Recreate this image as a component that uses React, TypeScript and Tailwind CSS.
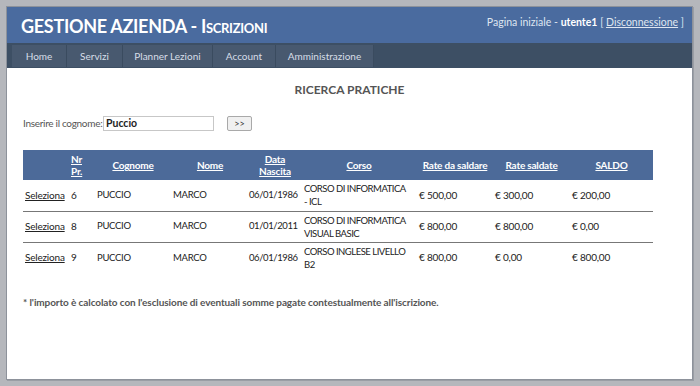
import React from 'react';

const rows = [
  { nr: '6', cognome: 'PUCCIO', nome: 'MARCO', nascita: '06/01/1986', corso: 'CORSO DI INFORMATICA - ICL', daSaldare: '€ 500,00', saldate: '€ 300,00', saldo: '€ 200,00' },
  { nr: '8', cognome: 'PUCCIO', nome: 'MARCO', nascita: '01/01/2011', corso: 'CORSO DI INFORMATICA VISUAL BASIC', daSaldare: '€ 800,00', saldate: '€ 800,00', saldo: '€ 0,00' },
  { nr: '9', cognome: 'PUCCIO', nome: 'MARCO', nascita: '06/01/1986', corso: 'CORSO INGLESE LIVELLO B2', daSaldare: '€ 800,00', saldate: '€ 0,00', saldo: '€ 800,00' },
];

const menu = [
  { label: 'Home', w: 'w-[55px]' },
  { label: 'Servizi', w: 'w-[56px]' },
  { label: 'Planner Lezioni', w: 'w-[90px]' },
  { label: 'Account', w: 'w-[63px]' },
  { label: 'Amministrazione', w: 'w-[98px]' },
];

export default function App() {
  return (
    <div className="w-[700px] h-[386px] bg-[#b5b7bc] p-[6px] font-['Lato',sans-serif] text-[10px]">
      <div className="h-[374px] w-[687px] bg-white border border-[#8d929b] shadow-[1px_1px_0_#9a9ea5] flex flex-col">
        {/* Header */}
        <div className="h-[36px] bg-[#4a6b9f] flex items-start justify-between pl-[14px] pr-[8px]">
          <h1 className="text-white font-bold text-[18px] leading-none mt-[10px] tracking-[-0.3px]">
            GESTIONE AZIENDA - <span className="[font-variant:small-caps]">Iscrizioni</span>
          </h1>
          <div className="text-[#dfe6f1] text-[10.5px] mt-[8px]">
            Pagina iniziale - <span className="font-bold text-white">utente1</span> [ <span className="underline">Disconnessione</span> ]
          </div>
        </div>

        {/* Menu */}
        <div className="h-[25px] bg-[#3d4f64] flex pl-[5px] pt-[2px]">
          {menu.map((m) => (
            <div key={m.label} className={`${m.w} h-[22px] bg-[#48596f] border-r border-[#3a4b5f] text-[#d7dee8] text-[10px] flex items-center justify-center`}>
              {m.label}
            </div>
          ))}
        </div>

        {/* Content */}
        <div className="px-[16px] pt-[13px]">
          <div className="text-center text-[#555] font-bold text-[12px]">RICERCA PRATICHE</div>

          <div className="flex items-center mt-[17px] text-[#555] text-[10px]">
            <span className="w-[79px] tracking-[-0.3px] whitespace-nowrap">Inserire il cognome:</span>
            <input
              defaultValue="Puccio"
              className="ml-[1px] w-[111px] h-[15px] border border-[#c7c7c7] px-[2px] text-[10.5px] font-bold text-[#222] outline-none"
            />
            <button className="ml-[13px] w-[25px] h-[15px] border border-[#a9a9a9] rounded-[2px] bg-[#f0f0f0] text-[9px] text-[#333] leading-none">
              &gt;&gt;
            </button>
          </div>

          <table className="mt-[19px] w-[630px] table-fixed border-collapse text-[10px] text-[#222] tracking-[-0.2px]">
            <colgroup>
              <col className="w-[44px]" />
              <col className="w-[28px]" />
              <col className="w-[76px]" />
              <col className="w-[78px]" />
              <col className="w-[52px]" />
              <col className="w-[116px]" />
              <col className="w-[76px]" />
              <col className="w-[77px]" />
              <col className="w-[83px]" />
            </colgroup>
            <thead>
              <tr className="h-[30px] bg-[#4c6a99] text-white underline leading-[12px]">
                <th></th>
                <th className="text-left px-[4px] font-bold">Nr<br />Pr.</th>
                <th className="font-bold">Cognome</th>
                <th className="font-bold">Nome</th>
                <th className="font-bold">Data<br />Nascita</th>
                <th className="font-bold">Corso</th>
                <th className="font-bold">Rate da saldare</th>
                <th className="font-bold">Rate saldate</th>
                <th className="font-bold">SALDO</th>
              </tr>
            </thead>
            <tbody>
              {rows.map((r, i) => (
                <tr key={r.nr} className={`h-[31px] ${i < rows.length - 1 ? 'border-b border-[#777]' : ''}`}>
                  <td className="px-[2px] underline">Seleziona</td>
                  <td className="px-[4px]">{r.nr}</td>
                  <td className="px-[2px] text-[9.5px] tracking-[-0.3px]">{r.cognome}</td>
                  <td className="px-[2px] text-[9.5px] tracking-[-0.3px]">{r.nome}</td>
                  <td className="pl-0 pr-[5px] text-right text-[9.5px] tracking-[-0.4px] whitespace-nowrap">{r.nascita}</td>
                  <td className="pl-[3px] pr-[9px] text-[9.5px] tracking-[-0.5px] leading-[13px] align-top pt-[2px]">{r.corso}</td>
                  <td className="px-[2px]">{r.daSaldare}</td>
                  <td className="px-[2px]">{r.saldate}</td>
                  <td className="px-[2px]">{r.saldo}</td>
                </tr>
              ))}
            </tbody>
          </table>

          <div className="mt-[22px] font-bold text-[#555] text-[10px] tracking-[-0.1px]">
            * l'importo è calcolato con l'esclusione di eventuali somme pagate contestualmente all'iscrizione.
          </div>
        </div>
      </div>
    </div>
  );
}
